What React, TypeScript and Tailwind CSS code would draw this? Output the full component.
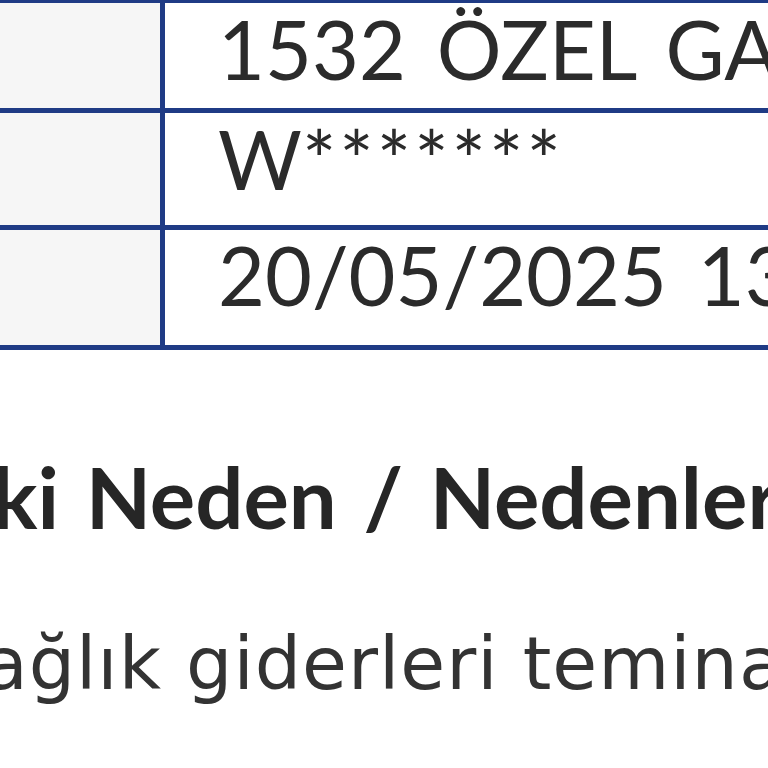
export default function App() {
  const rows = [
    { value: "1532 ÖZEL GAZİOSMANPAŞA HASTANESİ", h: "h-[110px]", pt: "pt-[5px]" },
    { value: "W*******", h: "h-[117px]", pt: "pt-[5px]" },
    { value: "20/05/2025 13:45", h: "h-[115px]", pt: "pt-[4px]" },
  ];

  return (
    <main className="w-[768px] h-[768px] overflow-hidden bg-white text-[#2b2b2b]">
      {/* tablo */}
      <div className="border-t-[3px] border-b-[5px] border-[#1f3b85] divide-y-[5px] divide-[#1f3b85] font-['Lato',sans-serif]">
        {rows.map((r) => (
          <div key={r.value} className={`flex ${r.h}`}>
            <div className="w-[165px] shrink-0 bg-[#f6f6f6] border-r-[5px] border-[#1f3b85]" />
            <div
              className={`flex-1 pl-[53px] ${r.pt} text-[81px] leading-[81px] whitespace-nowrap overflow-hidden [word-spacing:10px]`}
            >
              {r.value.startsWith("W") ? (
                <>
                  W<span className="tracking-[3px]">*******</span>
                </>
              ) : (
                r.value
              )}
            </div>
          </div>
        ))}
      </div>

      {/* başlık */}
      <h2 className="mt-[104px] -ml-[8px] font-['Lato',sans-serif] text-[85px] leading-[85px] font-bold whitespace-nowrap text-[#262626] [word-spacing:6px]">
        ki Neden / Nedenler
      </h2>

      {/* açıklama */}
      <p className="mt-[88px] -ml-[17px] font-['DejaVu_Sans',sans-serif] text-[73px] leading-[73px] tracking-[1px] whitespace-nowrap text-[#333333]">
        ağlık giderleri teminatı kapsamında
      </p>
    </main>
  );
}
